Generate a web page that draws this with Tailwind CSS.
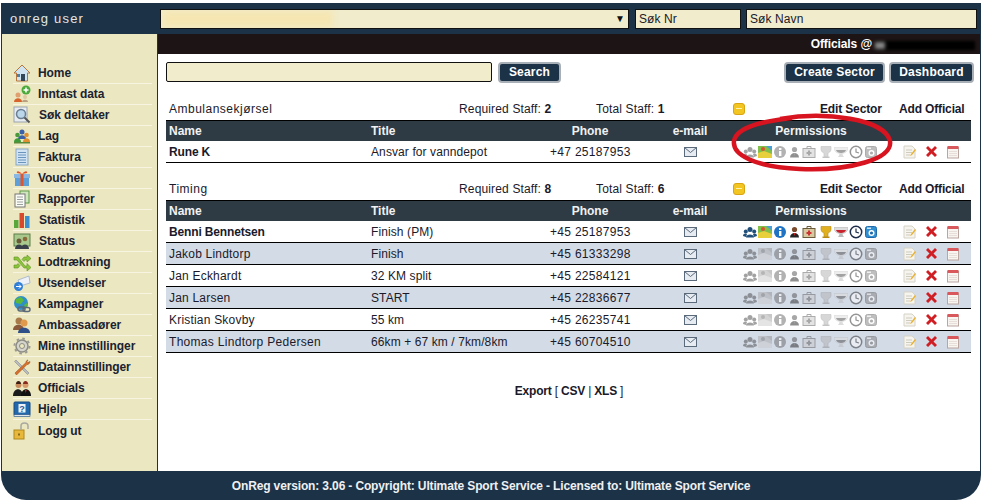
<!DOCTYPE html>
<html><head><meta charset="utf-8"><script src="https://cdn.jsdelivr.net/npm/@tailwindcss/browser@4"></script></head>
<body class="bg-white overflow-hidden font-['Liberation_Sans',Arial,sans-serif] text-[12px] text-[#1a1a2a]">
<svg class="hidden" width="0" height="0">
<defs>
<symbol id="p1" viewBox="0 0 14 14"><circle cx="7" cy="4.500" r="2.500" fill="#1f4f7a"/><circle cx="2.800" cy="6.500" r="2" fill="#1f4f7a"/><circle cx="11.200" cy="6.500" r="2" fill="#1f4f7a"/><path d="M3 12.500c0-4 8-4 8 0zM0 11c0-3 3-3 4-2l-1 3zM14 11c0-3-3-3-4-2l1 3z" fill="#1f4f7a"/></symbol>
<symbol id="p2" viewBox="0 0 14 14"><rect x="0" y="1" width="14" height="12" fill="#7fbf4a"/><path d="M0 8l6-2 8 3v4H0z" fill="#e8cf3c"/><path d="M8 1h6v5z" fill="#4a9fd8"/><circle cx="5" cy="4" r="2" fill="#d8552c"/></symbol>
<symbol id="p3" viewBox="0 0 14 14"><circle cx="7" cy="7" r="6" fill="#1f73c4"/><rect x="6" y="6" width="2.400" height="5" fill="#fff"/><rect x="6" y="3" width="2.400" height="2" fill="#fff"/></symbol>
<symbol id="p4" viewBox="0 0 14 14"><circle cx="7.500" cy="4.500" r="2.600" fill="#7a4a2c"/><path d="M3 12.500c0-6 9-6 9 0z" fill="#222"/><path d="M6.500 8l1 3 1-3z" fill="#c22"/></symbol>
<symbol id="p5" viewBox="0 0 14 14"><rect x="1" y="3.500" width="12" height="9" fill="#d8c9a0" stroke="#6a5a3a"/><path d="M5 3.500V1.500h4v2" fill="none" stroke="#6a5a3a"/><path d="M6 5.500h2V7h1.500v2H8v1.500H6V9H4.500V7H6z" fill="#c33"/></symbol>
<symbol id="p6" viewBox="0 0 14 14"><path d="M2 1.500h10v3c0 2.500-3 3.500-3 3.500v3.500H5V8S2 7 2 4.500z" fill="#e0b020" stroke="#b98a10" stroke-width=".6"/><path d="M3.500 11.500h7V13h-7z" fill="#b98a10"/></symbol>
<symbol id="p7" viewBox="0 0 14 14"><path d="M0 2.500h14c0 4-3 6-7 6s-7-2-7-6z" fill="#ddd" stroke="#aaa" stroke-width=".5"/><path d="M2 5h10c-.5 2-2.500 3-5 3S2.500 7 2 5z" fill="#c8232c"/><path d="M5.300 8.500h3.400V10l1.300 2H4l1.300-2z" fill="#bbb"/></symbol>
<symbol id="p8" viewBox="0 0 14 14"><circle cx="7" cy="7" r="5.700" fill="#fff" stroke="#1d2d4a" stroke-width="1.500"/><path d="M7 3.500V7l3 1" fill="none" stroke="#1d2d4a" stroke-width="1.200"/></symbol>
<symbol id="p9" viewBox="0 0 14 14"><rect x="1.500" y="1.500" width="11" height="11" rx="2" fill="#2f8fd0" stroke="#1c68a8"/><rect x="3" y="2.500" width="4" height="1.500" fill="#cfe8f8"/><circle cx="7.500" cy="8" r="3" fill="#fff"/><circle cx="7.500" cy="8" r="1.600" fill="#1c68a8"/></symbol>
<symbol id="strip" viewBox="0 0 136 14"><use href="#p1" x="0" width="14" height="14"/><use href="#p2" x="15" width="14" height="14"/><use href="#p3" x="30" width="14" height="14"/><use href="#p4" x="44" width="14" height="14"/><use href="#p5" x="59" width="14" height="14"/><use href="#p6" x="76" width="14" height="14"/><use href="#p7" x="91" width="14" height="14"/><use href="#p8" x="106" width="14" height="14"/><use href="#p9" x="121" width="14" height="14"/></symbol>
<symbol id="stripnm" viewBox="0 0 136 14"><use href="#p1" x="0" width="14" height="14"/><use href="#p3" x="30" width="14" height="14"/><use href="#p4" x="44" width="14" height="14"/><use href="#p5" x="59" width="14" height="14"/><use href="#p6" x="76" width="14" height="14"/><use href="#p7" x="91" width="14" height="14"/><use href="#p8" x="106" width="14" height="14"/><use href="#p9" x="121" width="14" height="14"/></symbol>
<symbol id="mail" viewBox="0 0 13 10"><rect x=".5" y=".5" width="12" height="9" fill="#e6ecf2" stroke="#5a6a7a"/><path d="M.5.500l6 5 6-5" fill="none" stroke="#5a6a7a"/></symbol>
<symbol id="act" viewBox="0 0 57 14"><path d="M1 1h8l3 3v9H1z" fill="#f6f4ee" stroke="#d6d2c6"/><path d="M3 5h6M3 7.500h6M3 10h4" stroke="#c4c0b2" stroke-width=".8"/><path d="M8 9l4-5 1 1-4 5-2 1z" fill="#e8b030"/><path d="M23 3l2-2 3.500 3.500L32 1l2 2-3.500 3.500L34 10l-2 2-3.500-3.500L25 12l-2-2 3.500-3.500z" fill="#cf1f24"/><rect x="44.500" y="2.500" width="11" height="10.500" fill="#f8f4f0" stroke="#b9a6a0"/><rect x="44.500" y="1" width="11" height="3" fill="#d8585c"/><path d="M46 6.500h8M46 8.500h8M46 10.500h8" stroke="#e2d8d4" stroke-width=".8"/></symbol>
</defs>
</svg>

<div class="w-[980px] h-[497px] ml-[1px] mt-[3px] flex flex-col relative">
  <div class="h-[31px] bg-[#1c3247] flex items-center shrink-0">
    <div class="w-[158px] pl-[9px] text-[#e4e6e6] text-[13px] tracking-[1.200px]">onreg user</div>
    <div class="ml-[1px] w-[469px] h-[20px] bg-[#f1eccb] border border-[#111] flex items-center justify-end pr-[3px] relative overflow-hidden">
      <div class="absolute left-[2px] top-[1px] w-[170px] h-[16px] bg-[#f6e6b2] blur-[3px]"></div>
      <span class="text-[10px] text-[#111] leading-none relative">▼</span>
    </div>
    <div class="ml-[6px] w-[106px] h-[20px] bg-[#f1eccb] border border-[#111] pl-[3px] leading-[18px] tracking-[.1px]">Søk Nr</div>
    <div class="ml-[5px] w-[231px] h-[20px] bg-[#f1eccb] border border-[#111] pl-[3px] leading-[18px] tracking-[.1px]">Søk Navn</div>
  </div>
  <div class="flex flex-1 min-h-0 border-l border-r border-[#1c3247]">
    <aside class="w-[156px] shrink-0 bg-[#ebe7c1] border-r border-[#1c3247] pt-[29px] pl-[11px] pr-[5px] font-bold text-[#1b2230] tracking-[-.08px]">
      <div class="h-[21px] flex items-center gap-[7px] border-b border-[#f7f5e2]"><svg width="18" height="18" viewBox="0 0 18 18"><path d="M9 1L1 9h2.500v8h11V9H17z" fill="#cfe3f0" stroke="#b8763c"/><rect x="8" y="10" width="4" height="7" fill="#33475a"/><rect x="4" y="10" width="3" height="3" fill="#4c7fa8"/></svg><span>Home</span></div>
      <div class="h-[21px] flex items-center gap-[7px] border-b border-[#f7f5e2]"><svg width="18" height="18" viewBox="0 0 18 18"><circle cx="5" cy="10" r="2.500" fill="#e0a070"/><path d="M1 17c0-5 8-5 8 0z" fill="#d8642c"/><circle cx="12" cy="12" r="2" fill="#e0c8a0"/><path d="M9 17c0-3 6-3 6 0z" fill="#b8a080"/><circle cx="13" cy="5" r="4.500" fill="#4caa3c"/><path d="M13 2.500v5M10.500 5h5" stroke="#fff" stroke-width="1.500"/></svg><span>Inntast data</span></div>
      <div class="h-[21px] flex items-center gap-[8px] border-b border-[#f7f5e2]"><svg width="18" height="18" viewBox="0 0 18 18"><rect x="1" y="1" width="13" height="15" fill="#e8ecf0" stroke="#9aa4ae"/><circle cx="8" cy="8" r="4.500" fill="#bcd6ea" stroke="#6a7f92" stroke-width="1.500"/><path d="M11.500 11.500l5 5" stroke="#555" stroke-width="2"/></svg><span>Søk deltaker</span></div>
      <div class="h-[21px] flex items-center gap-[7px] border-b border-[#f7f5e2]"><svg width="18" height="18" viewBox="0 0 18 18"><circle cx="9" cy="5" r="2.500" fill="#3b5fa8"/><path d="M5 12c0-5 8-5 8 0z" fill="#3b5fa8"/><circle cx="4.500" cy="8" r="2.300" fill="#4a9a3c"/><path d="M1 15c0-5 7-5 7 0z" fill="#3f9a3a"/><circle cx="13.500" cy="8" r="2.300" fill="#e09030"/><path d="M10 15c0-5 7-5 7 0z" fill="#e09030"/><rect x="1" y="15" width="16" height="1.500" fill="#5a8a3a"/></svg><span>Lag</span></div>
      <div class="h-[21px] flex items-center gap-[7px] border-b border-[#f7f5e2]"><svg width="18" height="18" viewBox="0 0 18 18"><rect x="3" y="1" width="12" height="16" fill="#cfe3f4" stroke="#8aa8c4"/><path d="M5 4.500h8M5 7h8M5 9.500h8M5 12h8M5 14.500h8" stroke="#6a94bc"/></svg><span>Faktura</span></div>
      <div class="h-[21px] flex items-center gap-[7px] border-b border-[#f7f5e2]"><svg width="18" height="18" viewBox="0 0 18 18"><rect x="2" y="8" width="14" height="9" fill="#5f9fd8"/><rect x="1" y="5" width="16" height="4" fill="#8ab8e4"/><rect x="7.500" y="5" width="3" height="12" fill="#e0562c"/><path d="M9 5C6 1 3 2 4 4zM9 5c3-4 6-3 5-1z" fill="#e0562c"/></svg><span>Voucher</span></div>
      <div class="h-[21px] flex items-center gap-[7px] border-b border-[#f7f5e2]"><svg width="18" height="18" viewBox="0 0 18 18"><rect x="7" y="1" width="9" height="12" fill="#cfe6bf" stroke="#5f9a4a"/><rect x="2" y="4" width="10" height="13" fill="#fbfbf6" stroke="#777"/><path d="M4 7h6M4 9.500h6M4 12h6M4 14.500h6" stroke="#9aa0a0"/></svg><span>Rapporter</span></div>
      <div class="h-[21px] flex items-center gap-[8px] border-b border-[#f7f5e2]"><svg width="18" height="18" viewBox="0 0 18 18"><rect x="1" y="9" width="4.500" height="8" fill="#5aa83c"/><rect x="6.500" y="2" width="4.500" height="15" fill="#d8482c"/><rect x="12" y="5" width="4.500" height="12" fill="#3b8fd0"/></svg><span>Statistik</span></div>
      <div class="h-[21px] flex items-center gap-[8px] border-b border-[#f7f5e2]"><svg width="18" height="18" viewBox="0 0 18 18"><rect x="1" y="2" width="16" height="12" fill="#a9c98c" stroke="#5d7d4a"/><circle cx="6" cy="9" r="2.500" fill="#6a5a3a"/><circle cx="12" cy="7" r="2.300" fill="#8a6a3a"/><path d="M2 17c0-6 8-6 8 0zM8 17c0-6 8-6 8 0z" fill="#39404a"/></svg><span>Status</span></div>
      <div class="h-[21px] flex items-center gap-[7px] border-b border-[#f7f5e2]"><svg width="18" height="18" viewBox="0 0 18 18"><path d="M1 4h4l7 9h2v-2.500l4 4-4 3.500V15h-3L4 7H1z" fill="#8cc43c" stroke="#5a9020" stroke-width=".6"/><path d="M1 15h4l2-2.500-2-2L4 12H1zM14 2v2h-3L9 6.500l2 2L12 7h2v2l4-3.500z" fill="#8cc43c" stroke="#5a9020" stroke-width=".6"/></svg><span>Lodtrækning</span></div>
      <div class="h-[21px] flex items-center gap-[7px] border-b border-[#f7f5e2]"><svg width="18" height="18" viewBox="0 0 18 18"><path d="M5 6l11-4 1 7-10 3z" fill="#eef2f8" stroke="#b0bccc"/><circle cx="5.500" cy="12.500" r="4.500" fill="#2f7fd8"/><path d="M3 12.500h5M6 10.500l2 2-2 2" stroke="#fff" fill="none"/></svg><span>Utsendelser</span></div>
      <div class="h-[21px] flex items-center gap-[7px] border-b border-[#f7f5e2]"><svg width="18" height="18" viewBox="0 0 18 18"><circle cx="8" cy="8" r="7" fill="#2f8fc8"/><path d="M3 4l5-2 3 3-3 4-5-1zM11 10l3-2 1 3-3 2z" fill="#5ab83c"/><rect x="5" y="12" width="7" height="4" rx="2" fill="none" stroke="#5a6a7a" stroke-width="1.500"/><rect x="10" y="12.500" width="7" height="4" rx="2" fill="none" stroke="#5a6a7a" stroke-width="1.500"/></svg><span>Kampagner</span></div>
      <div class="h-[21px] flex items-center gap-[7px] border-b border-[#f7f5e2]"><svg width="18" height="18" viewBox="0 0 18 18"><circle cx="6" cy="5" r="3.500" fill="#a87a4a"/><path d="M0 14c0-7 11-7 11 0z" fill="#8a5a3a"/><circle cx="11" cy="7" r="3.500" fill="#e09a4c"/><path d="M5 17c0-7 12-7 12 0z" fill="#2f4f88"/></svg><span>Ambassadører</span></div>
      <div class="h-[21px] flex items-center gap-[7px] border-b border-[#f7f5e2]"><svg width="18" height="18" viewBox="0 0 18 18"><circle cx="9" cy="9" r="6" fill="#d4d4cc" stroke="#8c8c84" stroke-width="1.500"/><circle cx="9" cy="9" r="7.500" fill="none" stroke="#9a9a92" stroke-width="2" stroke-dasharray="2.500 3.400"/><circle cx="9" cy="9" r="2.500" fill="#ebe7c1" stroke="#8c8c84"/></svg><span>Mine innstillinger</span></div>
      <div class="h-[21px] flex items-center gap-[7px] border-b border-[#f7f5e2]"><svg width="18" height="18" viewBox="0 0 18 18"><path d="M3 2l13 13-1.500 1.500L1.500 3.500z" fill="#b8bcc0" stroke="#7a7e84" stroke-width=".5"/><path d="M15 2c-1 0-2 1-2 2.500L2 15l1.500 2L14 6.500c2 0 3-1.500 3-3l-2 1-1-1z" fill="#d8702c" stroke="#8a4418" stroke-width=".5"/></svg><span>Datainnstillinger</span></div>
      <div class="h-[21px] flex items-center gap-[7px] border-b border-[#f7f5e2]"><svg width="18" height="18" viewBox="0 0 18 18"><circle cx="5.500" cy="6" r="3" fill="#c88a5a"/><path d="M3 5c0-4 5-4 5 0z" fill="#3a1c10"/><path d="M0 17c0-9 10-9 10 0z" fill="#1c1c1c"/><circle cx="12.500" cy="6" r="3" fill="#d89a6a"/><path d="M10 5c0-4 5-4 5 0z" fill="#8a2a1c"/><path d="M8 17c0-9 10-9 10 0z" fill="#111"/><path d="M12 11l.8 3 .8-3z" fill="#c22"/></svg><span>Officials</span></div>
      <div class="h-[21px] flex items-center gap-[7px] border-b border-[#f7f5e2]"><svg width="18" height="18" viewBox="0 0 18 18"><rect x="1" y="2" width="16" height="13" rx="1" fill="#2268ac" stroke="#174a80"/><rect x="1" y="14.500" width="16" height="2" fill="#dfe6ee" stroke="#174a80" stroke-width=".6"/><rect x="5.500" y="4" width="7" height="8.500" fill="#eef3f8"/><text x="9" y="11.500" text-anchor="middle" font-size="9" font-weight="700" fill="#1c5a9c" font-family="Liberation Sans">?</text></svg><span>Hjelp</span></div>
      <div class="h-[21px] flex items-center gap-[7px]"><svg width="18" height="18" viewBox="0 0 18 18"><rect x="1" y="8" width="10" height="9" fill="#e8b83c" stroke="#b08818"/><path d="M8 8V4c0-4 7-4 7 0v3" fill="none" stroke="#a8a8a0" stroke-width="1.500"/><rect x="5" y="11.500" width="2" height="2" fill="#8a6a18"/></svg><span>Logg ut</span></div>
    </aside>
    <main class="flex-1 min-w-0 bg-white relative">
      <div class="h-[20px] bg-[#1d1415] flex justify-end items-center pr-[5px] text-white font-bold tracking-[-.1px]">
        <span>Officials @</span>
        <span class="w-[100px] h-[9px] ml-[3px] mt-[2px] bg-[#000] blur-[1.500px] relative"><span class="absolute left-0 top-[1px] w-[10px] h-[7px] bg-[#888] blur-[1px]"></span></span>
      </div>
      <div class="flex items-center h-[20px] mt-[8px] ml-[8px] pr-[6px]">
        <div class="w-[326px] h-[20px] bg-[#f1eccb] border border-[#111] rounded-[2px]"></div>
        <div class="ml-[6px] w-[63px] h-[21px] bg-[#1c3247] border-2 border-[#a9afb6] rounded-[4px] text-white font-bold text-center leading-[17px] tracking-[.2px]">Search</div>
        <div class="ml-auto w-[101px] h-[21px] bg-[#1c3247] border-2 border-[#a9afb6] rounded-[4px] text-white font-bold text-center leading-[17px] tracking-[.2px]">Create Sector</div>
        <div class="ml-[4px] w-[85px] h-[21px] bg-[#1c3247] border-2 border-[#a9afb6] rounded-[4px] text-white font-bold text-center leading-[17px] tracking-[.2px]">Dashboard</div>
      </div>

      <div class="ml-[8px] w-[805px] mt-[17px]">
        <div class="grid grid-cols-[293px_137px_137px_87px_79px_72px] h-[21px] pb-[2px] items-center">
          <span class="pl-[3px] tracking-[.5px]">Ambulansekjørsel</span><span class="tracking-[.15px]">Required Staff: <b>2</b></span><span class="tracking-[.15px]">Total Staff: <b>1</b></span>
          <span class="w-[12px] h-[12px] rounded-[3px] bg-[#f2c521] border border-[#d9a514] flex items-center justify-center"><span class="w-[6px] h-[1.500px] bg-[#fff3b0]"></span></span>
          <span class="font-bold tracking-[-.15px]">Edit Sector</span><span class="font-bold tracking-[-.15px]">Add Official</span>
        </div>
        <div class="grid grid-cols-[202px_172px_100px_100px_142px_89px] h-[21px] bg-[#2f3b44] border-t border-black items-center text-[#f0f2f4] font-bold">
          <span class="pl-[3px]">Name</span><span class="pl-[3px]">Title</span><span class="text-center">Phone</span><span class="text-center">e-mail</span><span class="text-center">Permissions</span><span></span>
        </div>
        <div class="grid grid-cols-[202px_172px_100px_100px_142px_89px] h-[22px] border-b border-black items-center">
          <span class="pl-[3px] font-bold tracking-[-.15px]">Rune K</span><span class="pl-[3px] tracking-[.1px]">Ansvar for vanndepot</span><span class="pl-[10px] tracking-[.3px]">+47 25187953</span><span class="flex justify-center"><svg width="13" height="10"><use href="#mail"/></svg></span>
          <span class="pl-[3px] relative h-[14px]"><svg class="grayscale opacity-50" width="136" height="14"><use href="#stripnm"/></svg><svg class="absolute left-[18px] top-0" width="14" height="14"><use href="#p2"/></svg></span><span class="pl-[21px]"><svg width="57" height="14"><use href="#act"/></svg></span>
        </div>
      </div>

      <div class="ml-[8px] w-[805px] mt-[16px]">
        <div class="grid grid-cols-[293px_137px_137px_87px_79px_72px] h-[21px] pb-[2px] items-center">
          <span class="pl-[3px] tracking-[.5px]">Timing</span><span class="tracking-[.15px]">Required Staff: <b>8</b></span><span class="tracking-[.15px]">Total Staff: <b>6</b></span>
          <span class="w-[12px] h-[12px] rounded-[3px] bg-[#f2c521] border border-[#d9a514] flex items-center justify-center"><span class="w-[6px] h-[1.500px] bg-[#fff3b0]"></span></span>
          <span class="font-bold tracking-[-.15px]">Edit Sector</span><span class="font-bold tracking-[-.15px]">Add Official</span>
        </div>
        <div class="grid grid-cols-[202px_172px_100px_100px_142px_89px] h-[21px] bg-[#2f3b44] border-t border-black items-center text-[#f0f2f4] font-bold">
          <span class="pl-[3px]">Name</span><span class="pl-[3px]">Title</span><span class="text-center">Phone</span><span class="text-center">e-mail</span><span class="text-center">Permissions</span><span></span>
        </div>
        <div class="grid grid-cols-[202px_172px_100px_100px_142px_89px] h-[22px] border-b border-black items-center">
          <span class="pl-[3px] font-bold tracking-[-.15px]">Benni Bennetsen</span><span class="pl-[3px] tracking-[.1px]">Finish (PM)</span><span class="pl-[10px] tracking-[.3px]">+45 25187953</span><span class="flex justify-center"><svg width="13" height="10"><use href="#mail"/></svg></span>
          <span class="pl-[3px] h-[14px]"><svg width="136" height="14"><use href="#strip"/></svg></span><span class="pl-[21px]"><svg width="57" height="14"><use href="#act"/></svg></span>
        </div>
        <div class="grid grid-cols-[202px_172px_100px_100px_142px_89px] h-[22px] border-b border-black items-center bg-[#d3dbe7]">
          <span class="pl-[3px] tracking-[.2px]">Jakob Lindtorp</span><span class="pl-[3px] tracking-[.1px]">Finish</span><span class="pl-[10px] tracking-[.3px]">+45 61333298</span><span class="flex justify-center"><svg width="13" height="10"><use href="#mail"/></svg></span>
          <span class="pl-[3px] h-[14px]"><svg class="grayscale opacity-50" width="136" height="14"><use href="#strip"/></svg></span><span class="pl-[21px]"><svg width="57" height="14"><use href="#act"/></svg></span>
        </div>
        <div class="grid grid-cols-[202px_172px_100px_100px_142px_89px] h-[22px] border-b border-black items-center">
          <span class="pl-[3px] tracking-[.2px]">Jan Eckhardt</span><span class="pl-[3px] tracking-[.1px]">32 KM split</span><span class="pl-[10px] tracking-[.3px]">+45 22584121</span><span class="flex justify-center"><svg width="13" height="10"><use href="#mail"/></svg></span>
          <span class="pl-[3px] h-[14px]"><svg class="grayscale opacity-50" width="136" height="14"><use href="#strip"/></svg></span><span class="pl-[21px]"><svg width="57" height="14"><use href="#act"/></svg></span>
        </div>
        <div class="grid grid-cols-[202px_172px_100px_100px_142px_89px] h-[22px] border-b border-black items-center bg-[#d3dbe7]">
          <span class="pl-[3px] tracking-[.2px]">Jan Larsen</span><span class="pl-[3px] tracking-[.1px]">START</span><span class="pl-[10px] tracking-[.3px]">+45 22836677</span><span class="flex justify-center"><svg width="13" height="10"><use href="#mail"/></svg></span>
          <span class="pl-[3px] h-[14px]"><svg class="grayscale opacity-50" width="136" height="14"><use href="#strip"/></svg></span><span class="pl-[21px]"><svg width="57" height="14"><use href="#act"/></svg></span>
        </div>
        <div class="grid grid-cols-[202px_172px_100px_100px_142px_89px] h-[22px] border-b border-black items-center">
          <span class="pl-[3px] tracking-[.2px]">Kristian Skovby</span><span class="pl-[3px] tracking-[.1px]">55 km</span><span class="pl-[10px] tracking-[.3px]">+45 26235741</span><span class="flex justify-center"><svg width="13" height="10"><use href="#mail"/></svg></span>
          <span class="pl-[3px] h-[14px]"><svg class="grayscale opacity-50" width="136" height="14"><use href="#strip"/></svg></span><span class="pl-[21px]"><svg width="57" height="14"><use href="#act"/></svg></span>
        </div>
        <div class="grid grid-cols-[202px_172px_100px_100px_142px_89px] h-[22px] border-b border-black items-center bg-[#d3dbe7]">
          <span class="pl-[3px] tracking-[.3px]">Thomas Lindtorp Pedersen</span><span class="pl-[3px] tracking-[.1px]">66km + 67 km / 7km/8km</span><span class="pl-[10px] tracking-[.3px]">+45 60704510</span><span class="flex justify-center"><svg width="13" height="10"><use href="#mail"/></svg></span>
          <span class="pl-[3px] h-[14px]"><svg class="grayscale opacity-50" width="136" height="14"><use href="#strip"/></svg></span><span class="pl-[21px]"><svg width="57" height="14"><use href="#act"/></svg></span>
        </div>
      </div>
      <div class="mt-[29px] w-[822px] text-center tracking-[-.2px]"><b>Export</b> [ <b>CSV</b> | <b>XLS</b> ]</div>
      <svg class="absolute left-[572px] top-[79px] pointer-events-none" width="165" height="62" viewBox="0 0 165 62"><path d="M50 6C95-2 155 6 160 28 163 46 120 58 70 56 25 54 2 42 4 28 6 16 25 9 62 5" fill="none" stroke="#d7141f" stroke-width="4.500"/></svg>
    </main>
  </div>
  <div class="h-[29px] bg-[#1c3247] rounded-b-[25px] shrink-0 flex items-center justify-center text-[#eef0f2] font-bold tracking-[-.14px]">OnReg version: 3.06 - Copyright: Ultimate Sport Service - Licensed to: Ultimate Sport Service</div>
</div>
</body></html>
